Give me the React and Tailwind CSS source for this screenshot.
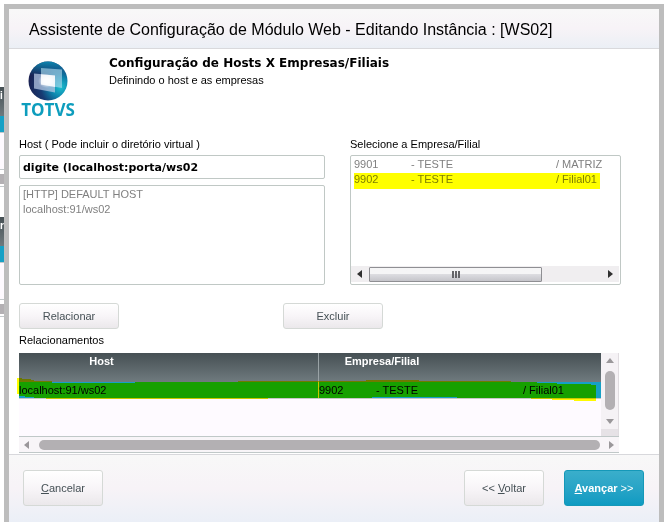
import React, { useState } from "react";

const hosts = ["[HTTP] DEFAULT HOST", "localhost:91/ws02"];

const branches = [
  { code: "9901", company: "- TESTE", branch: "/ MATRIZ" },
  { code: "9902", company: "- TESTE", branch: "/ Filial01" },
];

const relations = [
  {
    host: "localhost:91/ws02",
    code: "9902",
    company: "- TESTE",
    branch: "/ Filial01",
  },
];

const Logo = () => (
  <svg width="56" height="62" viewBox="0 0 56 62" role="img" aria-label="TOTVS">
    <defs>
      <radialGradient id="sphere" cx="0.82" cy="0.66" r="0.85">
        <stop offset="0" stopColor="#1cc0cf" />
        <stop offset="0.3" stopColor="#0c83ac" />
        <stop offset="0.6" stopColor="#173a72" />
        <stop offset="1" stopColor="#1a2050" />
      </radialGradient>
      <linearGradient id="shine" x1="0" y1="0" x2="0" y2="1">
        <stop offset="0" stopColor="#0b8fb8" stopOpacity="0.9" />
        <stop offset="0.35" stopColor="#0b8fb8" stopOpacity="0" />
      </linearGradient>
      <radialGradient id="glow">
        <stop offset="0.3" stopColor="#fff" />
        <stop offset="1" stopColor="#fff" stopOpacity="0" />
      </radialGradient>
    </defs>
    <circle cx="27" cy="20" r="19.5" fill="url(#sphere)" />
    <circle cx="27" cy="20" r="19.5" fill="url(#shine)" />
    <path d="M20 7L41 8.500V27L20 23.500Z" fill="#a9d6ea" opacity="0.65" />
    <path d="M13 12.500L34 14.500V31.500L13 27.500Z" fill="#b4c6e2" opacity="0.75" />
    <path d="M20 13.200L34 14.500V26L20 23.500Z" fill="#fff" opacity="0.85" />
    <ellipse cx="26" cy="20" rx="9" ry="7" fill="url(#glow)" opacity="0.8" />
    <text
      x="27"
      y="55"
      textAnchor="middle"
      fill="#0d9dbd"
      fontFamily="'Open Sans', sans-serif"
      fontWeight="700"
      fontSize="17"
    >
      TOTVS
    </text>
  </svg>
);

const Arrow = ({ d, className }) => (
  <svg width="8" height="8" viewBox="0 0 8 8" className={className} aria-hidden="true">
    <path d={d} fill="currentColor" />
  </svg>
);

const LEFT = "M6 0V8L1 4Z";
const RIGHT = "M2 0V8L7 4Z";
const UP = "M0 6H8L4 1Z";
const DOWN = "M0 2H8L4 7Z";

// slice of the parent window that stays visible beside the dialog
const BackgroundGrid = ({ label }) => (
  <div className="h-[130px]">
    <div className="h-[29px] bg-linear-to-b from-[#465054] to-[#6f7a7e] text-[10px] leading-[18px] font-bold text-white">
      {label}
    </div>
    <div className="h-4 bg-[#16a0c5]" />
    <div className="h-[38px] border-y border-[#c3c9cb] bg-[#fefaff]" />
    <div className="mt-1 h-[10px] bg-[#b3b0b3]" />
    <div className="mt-[2px] h-px bg-[#c3c9cb]" />
  </div>
);

const Button = ({ className, children }) => (
  <button
    type="button"
    className={`rounded-[3px] border border-[#d5d9d6] bg-linear-to-b from-white via-[#f8f5f8] to-[#ebe8eb] text-[11px] text-[#455055] ${className}`}
  >
    {children}
  </button>
);

export default function App() {
  const [host, setHost] = useState("digite (localhost:porta/ws02");

  return (
    <div className="flex min-h-screen bg-white font-['Liberation_Sans',Arial,sans-serif] text-[11px] text-black">
      <div className="w-1 shrink-0 pt-[87px]">
        <BackgroundGrid label="i" />
        <BackgroundGrid label="r" />
      </div>

      <main className="mt-1 mr-px flex flex-1 flex-col border-x-5 border-t-5 border-[#bdbdbd]">
        <header className="flex h-10 items-center border-b border-[#d9d9dc] bg-linear-to-b from-[#f8f8f8] via-[#f7f3f7] to-[#ebeff5] pl-5">
          <h1 className="pt-[2px] text-[16px] leading-5 whitespace-nowrap">
            Assistente de Configuração de Módulo Web - Editando Instância : [WS02]
          </h1>
        </header>

        <section className="flex gap-8 pt-3 pr-[38px] pl-3">
          <Logo />
          <div className="-mt-[6px]">
            <h2 className="font-['DejaVu_Sans',Verdana,sans-serif] text-[12px] leading-4 font-bold whitespace-nowrap">
              Configuração de Hosts X Empresas/Filiais
            </h2>
            <p className="leading-[18px]">Definindo o host e as empresas</p>
          </div>
        </section>

        <section className="grid grid-cols-[306fr_271fr] gap-[25px] pt-3 pr-[38px] pl-[10px]">
          <div className="flex flex-col">
            <label htmlFor="host" className="h-5 leading-[18px]">
              Host ( Pode incluir o diretório virtual )
            </label>
            <input
              id="host"
              value={host}
              onChange={(e) => setHost(e.target.value)}
              className="h-6 rounded-[2px] border border-[#c0c8c5] px-[3px] font-['DejaVu_Sans',Verdana,sans-serif] text-[11px] font-bold outline-none"
            />
            <select
              size={6}
              aria-label="Hosts"
              className="mt-[6px] h-25 appearance-none overflow-hidden rounded-[2px] border border-[#c0c8c5] py-[2px] text-[11px] text-[#808080] outline-none"
            >
              {hosts.map((item) => (
                <option key={item} className="h-[15px] min-h-0 p-0 pl-[3px] leading-[15px]">
                  {item}
                </option>
              ))}
            </select>
          </div>

          <div className="flex flex-col">
            <h3 id="branches-label" className="h-5 leading-[18px]">
              Selecione a Empresa/Filial
            </h3>
            <div className="flex flex-1 flex-col rounded-[2px] border border-[#c0c8c5] pr-px pb-[2px]">
              <ul
                role="listbox"
                aria-labelledby="branches-label"
                className="flex-1 pt-[2px] pr-[19px] pl-[3px] text-[#808080]"
              >
                {branches.map((item) => (
                  <li
                    key={item.code}
                    role="option"
                    aria-selected={item.code === "9902"}
                    className="grid h-[15px] grid-cols-[57px_1fr_44px] leading-[13px] whitespace-nowrap aria-selected:h-4 aria-selected:bg-[#ffff00] aria-selected:text-[#808000]"
                  >
                    <span>{item.code}</span>
                    <span>{item.company}</span>
                    <span>{item.branch}</span>
                  </li>
                ))}
              </ul>
              <div className="flex h-4 items-center bg-[#f0eef0] text-[#303030]">
                <Arrow d={LEFT} className="mx-[5px]" />
                <div className="flex h-[15px] w-[173px] items-center justify-center gap-px rounded-[1px] border border-[#8f8f93] bg-linear-to-b from-[#f5f5f6] from-45% via-[#dcdce0] via-50% to-[#c5c5ca]">
                  <i className="h-[7px] w-[2px] bg-[#66666a]" />
                  <i className="h-[7px] w-[2px] bg-[#66666a]" />
                  <i className="h-[7px] w-[2px] bg-[#66666a]" />
                </div>
                <Arrow d={RIGHT} className="mr-[5px] ml-auto" />
              </div>
            </div>
          </div>
        </section>

        <div className="flex gap-41 pt-[18px] pl-[10px]">
          <Button className="h-[26px] w-25">Relacionar</Button>
          <Button className="h-[26px] w-25">Excluir</Button>
        </div>

        <section className="pr-10 pl-[10px]">
          <h3 className="h-6 leading-[22px]">Relacionamentos</h3>
          <div className="flex h-[83px] bg-[#fefaff]">
            <div className="relative flex-1">
              <table className="w-full table-fixed border-separate border-spacing-0">
                <thead>
                  <tr className="h-[29px] bg-linear-to-b from-[#465054] to-[#707b7f] align-top leading-4 text-white">
                    <th className="w-[300px] border-r border-[#9aa3a6] p-0 pr-[134px]">Host</th>
                    <th className="p-0 pr-[156px]">Empresa/Filial</th>
                  </tr>
                </thead>
                <tbody>
                  {relations.map((row) => (
                    <tr key={row.host} className="bg-[#16a0c5] leading-4">
                      <td className="border-r border-b border-[#c8c8c8] p-0">{row.host}</td>
                      <td className="border-b border-[#c8c8c8] p-0">
                        <div className="grid grid-cols-[57px_1fr_78px] whitespace-nowrap">
                          <span>{row.code}</span>
                          <span>{row.company}</span>
                          <span>{row.branch}</span>
                        </div>
                      </td>
                    </tr>
                  ))}
                </tbody>
              </table>
              {/* hand drawn marker over the selected row */}
              <svg
                className="pointer-events-none absolute top-6 -left-[2px] h-6 w-full mix-blend-multiply"
                viewBox="0 0 582 24"
                preserveAspectRatio="none"
                shapeRendering="crispEdges"
                aria-hidden="true"
              >
                <path
                  d="M0 1H5V2H14V3H17V4H35V6H118V5H221V4H349V3H402V4H494V5H520V6H540V7H574V8H579V24H557V23H535V22H514V21H440V20H355V21H251V22H29V21H17V20H8V19H2V17H0Z"
                  fill="#ffff00"
                />
              </svg>
            </div>
            <div className="flex w-[18px] flex-col items-center border-r border-[#e0dce0] bg-[#f5f2f5] text-[#9a979a]">
              <Arrow d={UP} className="my-1" />
              <div className="mt-[2px] h-[39px] w-[10px] rounded-full bg-[#b3b0b3]" />
              <Arrow d={DOWN} className="mt-[7px] mb-auto" />
              <div className="h-[7px] w-full bg-[#e6e2e6]" />
            </div>
          </div>
          <div className="flex h-[17px] items-center border-y border-[#c0c8c8] bg-[#f8f5f8] text-[#9a979a]">
            <Arrow d={LEFT} className="mx-1" />
            <div className="ml-1 h-[10px] flex-1 rounded-full bg-[#b3b0b3]" />
            <Arrow d={RIGHT} className="mr-1 ml-[7px]" />
          </div>
        </section>

        <footer className="mt-px flex flex-1 items-start border-t border-[#d8d8dc] bg-linear-to-b from-[#f8f8f8] via-[#f7f3f7] to-[#ebeff7] pt-[15px] pr-[15px] pb-4 pl-[14px]">
          <Button className="h-9 w-20">
            <u>C</u>ancelar
          </Button>
          <Button className="ml-auto h-9 w-20">
            &lt;&lt; <u>V</u>oltar
          </Button>
          <button
            type="button"
            className="ml-5 h-9 w-20 rounded-[3px] border border-[#1598b8] bg-linear-to-b from-[#3aaecb] to-[#0d9bc2] font-bold whitespace-nowrap text-white"
          >
            <u>A</u>vançar <span className="font-normal">&gt;&gt;</span>
          </button>
        </footer>
      </main>
    </div>
  );
}
